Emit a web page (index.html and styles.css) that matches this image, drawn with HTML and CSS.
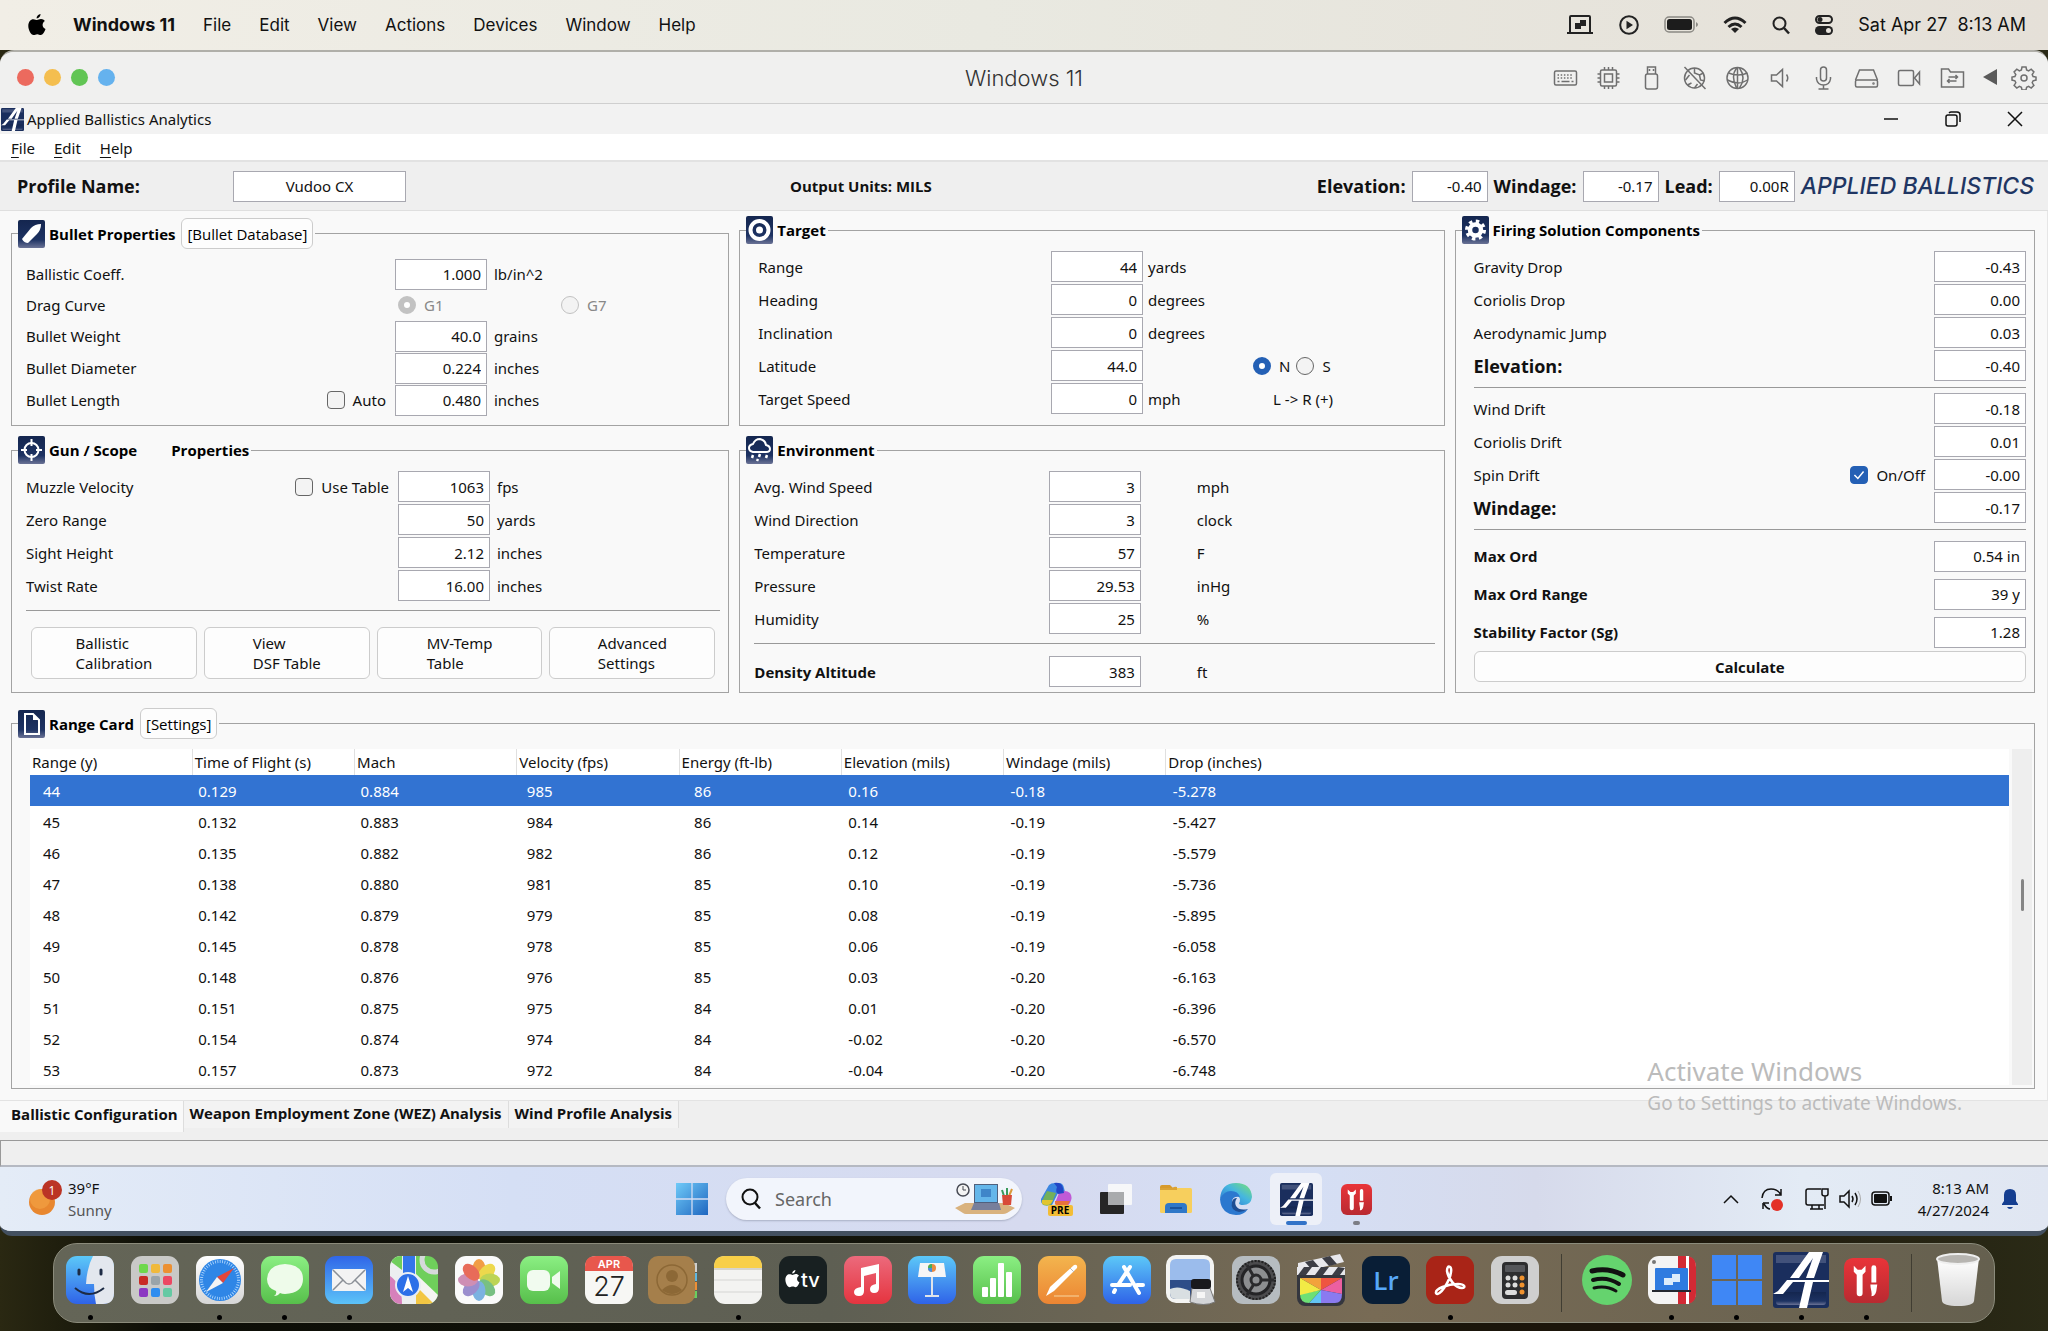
FILE: index.html
```
<!DOCTYPE html>
<html lang="en">
<head>
  <meta charset="UTF-8">
  <meta name="viewport" content="width=device-width, initial-scale=1.0">
  <title>Applied Ballistics Analytics</title>
  <link rel="stylesheet" href="styles.css">
</head>
<body>
  <!-- Shared icon shapes -->
  <svg class="defs" width="0" height="0" aria-hidden="true">
    <defs>
      <linearGradient id="navy" x1="0" y1="0" x2="0" y2="1"><stop offset="0" stop-color="#14264f"/><stop offset="0.7" stop-color="#1d3262"/><stop offset="1" stop-color="#6b7396"/></linearGradient>
      <linearGradient id="winblue" x1="0" y1="0" x2="1" y2="1"><stop offset="0" stop-color="#6fcaf8"/><stop offset="1" stop-color="#1f66c0"/></linearGradient>
      <linearGradient id="skyblue" x1="0" y1="0" x2="0" y2="1"><stop offset="0" stop-color="#5cc8f8"/><stop offset="1" stop-color="#2f63e8"/></linearGradient>
      <linearGradient id="blueup" x1="0" y1="0" x2="0" y2="1"><stop offset="0" stop-color="#3066e8"/><stop offset="1" stop-color="#5cc3f8"/></linearGradient>
      <linearGradient id="green" x1="0" y1="0" x2="0" y2="1"><stop offset="0" stop-color="#8bef83"/><stop offset="1" stop-color="#57bf4b"/></linearGradient>
      <linearGradient id="white" x1="0" y1="0" x2="0" y2="1"><stop offset="0" stop-color="#ffffff"/><stop offset="1" stop-color="#d6d6d6"/></linearGradient>
      <linearGradient id="red" x1="0" y1="0" x2="0" y2="1"><stop offset="0" stop-color="#e93439"/><stop offset="1" stop-color="#b92a31"/></linearGradient>
      <linearGradient id="pink" x1="0" y1="0" x2="0" y2="1"><stop offset="0" stop-color="#ec6a7c"/><stop offset="1" stop-color="#e5343f"/></linearGradient>
      <linearGradient id="orange" x1="0" y1="0" x2="0" y2="1"><stop offset="0" stop-color="#f3b54e"/><stop offset="1" stop-color="#ec8533"/></linearGradient>
      <linearGradient id="edge" x1="0" y1="1" x2="1" y2="0"><stop offset="0" stop-color="#2a6fd0"/><stop offset="0.55" stop-color="#45b6e0"/><stop offset="1" stop-color="#7be36f"/></linearGradient>
      <symbol id="ab" viewBox="0 0 56 56">
        <rect width="56" height="56" rx="3" fill="#1a2e5d"/>
        <path d="M3 3h50v8H3z" fill="#8f95b5" opacity=".35"/>
        <path d="M3 40h50v10q0 3-3 3H6q-3 0-3-3z" fill="url(#navy)"/>
        <path d="M17 26 36 0h14l-9 26h-8l7-20-14 20zM14 28h42v2H40l-6 26h-8l6-26H20L10 42H0l5-3z" fill="#fff"/>
      </symbol>
      <symbol id="tools" viewBox="0 0 46 46">
        <rect width="46" height="46" rx="9" fill="url(#red)"/>
        <path d="M10 8v6l3 3v19a3 3 0 0 0 6 0V17l3-3V8l-4 4h-4z" fill="#fff"/>
        <path d="M28 10a2 2 0 0 1 5 0v15h-5zM27 27h7l-1 7c-1 4-3 5-5 5 1-4-1-7-1-12z" fill="#fff"/>
      </symbol>
      <symbol id="win" viewBox="0 0 50 50"><path d="M0 0h24v24H0zM26 0h24v24H26zM0 26h24v24H0zM26 26h24v24H26z"/></symbol>
      <symbol id="apple" viewBox="0 0 18 22"><path d="M12.500 0c.2 2-1.700 4.400-3.800 4.400C8.400 2.300 10.500.2 12.500 0zM9 6c1 0 2.200-1 4-1 1.600 0 3 .8 3.900 2-3.400 2-2.800 6.700.6 8-.8 2.500-2.700 6-4.700 6-1.400 0-1.900-.8-3.500-.8S6.900 21 5.600 21C3 21 .3 16 .3 12 .3 7.700 2.700 5.200 5.300 5.200 6.900 5.200 8.200 6 9 6z"/></symbol>
    </defs>
  </svg>

  <header class="mac-menu">
    <svg class="apple" width="18" height="22"><use href="#apple"/></svg>
    <nav class="mac-nav">
      <a class="app-name" href="#">Windows 11</a>
      <a href="#">File</a>
      <a href="#">Edit</a>
      <a href="#">View</a>
      <a href="#">Actions</a>
      <a href="#">Devices</a>
      <a href="#">Window</a>
      <a href="#">Help</a>
    </nav>
    <div class="mac-status">
      <svg width="28" height="22" viewBox="0 0 28 22"><path d="M4 18V3q0-1 1-1h18q1 0 1 1v15" fill="none" stroke="#222" stroke-width="2"/><path d="M1 18h26v2H1zM9 9h5V6h6v6h-5v3H9z" fill="#222"/></svg>
      <svg width="20" height="20" viewBox="0 0 20 20"><circle cx="10" cy="10" r="8.800" fill="none" stroke="#222" stroke-width="2"/><path d="M7.500 5.800v8.400l6.500-4.200z" fill="#222"/></svg>
      <svg width="34" height="18" viewBox="0 0 34 18"><rect x="1" y="1" width="29" height="15" rx="4" fill="none" stroke="#8b8984" stroke-width="1.500"/><rect x="3" y="3" width="25" height="11" rx="2.500" fill="#1c1c1c"/><path d="M32 6v5q2-1 2-2.500T32 6z" fill="#8b8984"/></svg>
      <svg width="24" height="18" viewBox="0 0 24 18"><g fill="none" stroke="#222" stroke-width="3"><path d="M1.500 7q10.500-10 21 0"/><path d="M5.500 11q6.500-6 13 0"/></g><path d="m12 17-4-4q4-3 8 0z" fill="#222"/></svg>
      <svg width="18" height="19" viewBox="0 0 18 19"><circle cx="7.500" cy="7.500" r="6" fill="none" stroke="#222" stroke-width="2"/><path d="m12 12 5 5.500" stroke="#222" stroke-width="2.500"/></svg>
      <svg width="18" height="20" viewBox="0 0 18 20"><rect x="1" y="1" width="16" height="7" rx="3.500" fill="none" stroke="#222" stroke-width="2"/><circle cx="5" cy="4.500" r="2.500" fill="#222"/><rect y="11" width="18" height="9" rx="4.500" fill="#222"/><circle cx="13.500" cy="15.500" r="2.500" fill="#e8e4dd"/></svg>
      <span class="mac-clock">Sat Apr 27&nbsp; 8:13 AM</span>
    </div>
  </header>

  <div class="vm-window">
    <div class="vm-title">
      <div class="lights"><i class="red"></i><i class="yellow"></i><i class="green"></i><i class="blue"></i></div>
      <span class="vm-name">Windows 11</span>
      <div class="vm-tools">
        <svg width="24" height="24" viewBox="0 0 24 24"><rect x="1" y="5" width="22" height="14" rx="1.500"/><path d="M4 9h16M4 12h16" stroke-dasharray="1.500 1.700"/><path d="M4 15.500h2M8 15.500h8M18 15.500h2"/></svg>
        <svg width="24" height="24" viewBox="0 0 24 24"><rect x="4" y="4" width="16" height="16" rx="1.500"/><rect x="8" y="8" width="8" height="8"/><path d="M8 1v3M12 1v3M16 1v3M8 20v3M12 20v3M16 20v3M1 8h3M1 12h3M1 16h3M20 8h3M20 12h3M20 16h3"/></svg>
        <svg width="24" height="24" viewBox="0 0 24 24"><path d="M8 8V1h8v7M10 3v2M14 3v2"/><rect x="6" y="8" width="12" height="15" rx="2"/></svg>
        <svg width="24" height="24" viewBox="0 0 24 24"><circle cx="12" cy="12" r="10"/><path d="m2 1 21 22M12 2v5l5 2 4-2M7 9l-4 5M17 9l1 5 4 1M9 17l-4 2M12 22l3-4"/></svg>
        <svg width="24" height="24" viewBox="0 0 24 24"><circle cx="12" cy="12" r="10.500"/><path d="M3 7q10 4 19 0M2 14q11 6 20 0M11 2q-6 8 0 20M14 2q7 10 0 20M12 2v20"/></svg>
        <svg width="24" height="24" viewBox="0 0 24 24"><path d="M3 9h5l6-5.500v17L8 15H3zM18 8.500q2.500 3.500 0 7"/></svg>
        <svg width="24" height="24" viewBox="0 0 24 24"><rect x="9" y="1" width="6" height="14" rx="3"/><path d="M5 11v2q1 6 7 6t7-6v-2M12 19v4M7 23h10"/></svg>
        <svg width="24" height="24" viewBox="0 0 24 24"><path d="M1 14 5 4h14l4 10"/><rect x="1" y="14" width="22" height="7" rx="1.500"/><circle cx="19" cy="17.500" r=".5"/></svg>
        <svg width="24" height="24" viewBox="0 0 24 24"><rect x="1" y="4.500" width="15" height="15" rx="1.500"/><path d="m17 12 5-6v12z"/></svg>
        <svg width="24" height="24" viewBox="0 0 24 24"><path d="M1 21V3h7l2 3h13v15zM7 15h9M9 13l-2 2 2 2M8 11h9M15 9l2 2-2 2"/></svg>
        <svg class="tri" width="14" height="16" viewBox="0 0 14 16"><path d="M0 8 14 0v16z"/></svg>
        <svg width="24" height="24" viewBox="0 0 24 24"><circle cx="12" cy="12" r="3"/><path d="m10 1h4l.6 3 2 .9 2.600-1.700 2.700 2.700-1.700 2.600.9 2 2.900.6v3l-2.900.7-.9 2 1.700 2.600-2.700 2.700-2.600-1.700-2 .9-.6 2.700h-4l-.6-2.700-2-.9-2.600 1.700-2.700-2.700 1.700-2.600-.9-2-2.900-.7v-3l2.900-.6.9-2-1.700-2.600 2.700-2.700 2.600 1.700 2-.9z"/></svg>
      </div>
    </div>

    <div class="app-title">
      <svg width="23" height="23" viewBox="0 0 56 56"><use href="#ab"/></svg>
      <span>Applied Ballistics Analytics</span>
      <div class="win-buttons">
        <button aria-label="Minimize"><svg width="16" height="16"><path d="M1 8h14" stroke="#111" stroke-width="1.500"/></svg></button>
        <button aria-label="Restore"><svg width="16" height="16" fill="none" stroke="#111" stroke-width="1.500"><rect x="1" y="4" width="11" height="11" rx="2"/><path d="M4 2q1-1 2-1h6q3 0 3 3v7"/></svg></button>
        <button aria-label="Close"><svg width="16" height="16"><path d="m1 1 14 14M15 1 1 15" stroke="#111" stroke-width="1.500"/></svg></button>
      </div>
    </div>
    <nav class="app-menu">
      <a href="#"><u>F</u>ile</a>
      <a href="#"><u>E</u>dit</a>
      <a href="#"><u>H</u>elp</a>
    </nav>

    <div class="profile-bar">
      <div class="profile-name">
        <label for="profile">Profile Name:</label>
        <input type="text" id="profile" value="Vudoo CX">
      </div>
      <strong class="units">Output Units: MILS</strong>
      <div class="outputs">
        <label for="outElev">Elevation:</label><input type="text" id="outElev" value="-0.40" readonly>
        <label for="outWind">Windage:</label><input type="text" id="outWind" value="-0.17" readonly>
        <label for="outLead">Lead:</label><input type="text" id="outLead" value="0.00R" readonly>
        <span class="brand">APPLIED BALLISTICS</span>
      </div>
    </div>

    <main class="page">
      <div class="panels">
        <fieldset class="panel bullet">
          <legend>
            <svg width="27" height="28" viewBox="0 0 27 28"><rect width="27" height="28" rx="2" fill="url(#navy)"/><path d="M4 19 13 8q4-4 10-4 0 6-4 10l-9 9q-4 0-6-4z" fill="#fff"/></svg>
            <span>Bullet Properties</span>
            <button class="legend-btn">[Bullet Database]</button>
          </legend>
          <div class="row"><label for="bc">Ballistic Coeff.</label><input type="text" id="bc" value="1.000"><span class="unit">lb/in^2</span></div>
          <div class="row drag">
            <span>Drag Curve</span>
            <div class="drag-options">
              <label class="check"><input type="radio" name="drag" checked disabled> G1</label>
              <label class="check"><input type="radio" name="drag" disabled> G7</label>
            </div>
          </div>
          <div class="row"><label for="weight">Bullet Weight</label><input type="text" id="weight" value="40.0"><span class="unit">grains</span></div>
          <div class="row"><label for="diameter">Bullet Diameter</label><input type="text" id="diameter" value="0.224"><span class="unit">inches</span></div>
          <div class="row">
            <div class="lead"><label for="length">Bullet Length</label><label class="check"><input type="checkbox"> Auto</label></div>
            <input type="text" id="length" value="0.480"><span class="unit">inches</span>
          </div>
        </fieldset>

        <fieldset class="panel target">
          <legend>
            <svg width="27" height="28" viewBox="0 0 27 28"><rect width="27" height="28" rx="2" fill="url(#navy)"/><circle cx="13.500" cy="14" r="9" fill="none" stroke="#fff" stroke-width="4"/><circle cx="13.500" cy="14" r="3.500" fill="#fff"/></svg>
            <span>Target</span>
          </legend>
          <div class="row"><label for="range">Range</label><input type="text" id="range" value="44"><span class="unit">yards</span></div>
          <div class="row"><label for="heading">Heading</label><input type="text" id="heading" value="0"><span class="unit">degrees</span></div>
          <div class="row"><label for="incl">Inclination</label><input type="text" id="incl" value="0"><span class="unit">degrees</span></div>
          <div class="row">
            <label for="lat">Latitude</label><input type="text" id="lat" value="44.0"><span class="unit"></span>
            <div class="extra">
              <label class="check"><input type="radio" name="hemi" checked> N</label>
              <label class="check"><input type="radio" name="hemi"> S</label>
            </div>
          </div>
          <div class="row"><label for="tspeed">Target Speed</label><input type="text" id="tspeed" value="0"><span class="unit">mph</span><span class="extra direction">L -&gt; R (+)</span></div>
        </fieldset>

        <fieldset class="panel firing">
          <legend>
            <svg width="27" height="28" viewBox="0 0 27 28"><rect width="27" height="28" rx="2" fill="url(#navy)"/><circle cx="13.500" cy="14" r="8.500" fill="none" stroke="#fff" stroke-width="4" stroke-dasharray="3.340 3.340"/><circle cx="13.500" cy="14" r="5.500" fill="none" stroke="#fff" stroke-width="4.500"/></svg>
            <span>Firing Solution Components</span>
          </legend>
          <div class="row"><label for="gdrop">Gravity Drop</label><input type="text" id="gdrop" value="-0.43" readonly></div>
          <div class="row"><label for="cdrop">Coriolis Drop</label><input type="text" id="cdrop" value="0.00" readonly></div>
          <div class="row"><label for="ajump">Aerodynamic Jump</label><input type="text" id="ajump" value="0.03" readonly></div>
          <div class="row"><label class="total" for="felev">Elevation:</label><input type="text" id="felev" value="-0.40" readonly></div>
          <hr>
          <div class="row"><label for="wdrift">Wind Drift</label><input type="text" id="wdrift" value="-0.18" readonly></div>
          <div class="row"><label for="cdrift">Coriolis Drift</label><input type="text" id="cdrift" value="0.01" readonly></div>
          <div class="row">
            <div class="lead"><label for="sdrift">Spin Drift</label><label class="check"><input type="checkbox" checked> On/Off</label></div>
            <input type="text" id="sdrift" value="-0.00" readonly>
          </div>
          <div class="row"><label class="total" for="fwind">Windage:</label><input type="text" id="fwind" value="-0.17" readonly></div>
          <hr>
          <div class="summary">
            <div class="row"><label for="maxord">Max Ord</label><input type="text" id="maxord" value="0.54 in" readonly></div>
            <div class="row"><label for="maxrange">Max Ord Range</label><input type="text" id="maxrange" value="39 y" readonly></div>
            <div class="row"><label for="sg">Stability Factor (Sg)</label><input type="text" id="sg" value="1.28" readonly></div>
          </div>
          <button class="calculate">Calculate</button>
        </fieldset>

        <fieldset class="panel gun">
          <legend>
            <svg width="27" height="28" viewBox="0 0 27 28"><rect width="27" height="28" rx="2" fill="url(#navy)"/><g fill="none" stroke="#fff" stroke-width="2"><circle cx="13.500" cy="14" r="7"/><path d="M13.500 3v7M13.500 18v7M3 14h6M18 14h6"/></g></svg>
            <span>Gun / Scope</span>
            <span class="legend-more">Properties</span>
          </legend>
          <div class="row">
            <div class="lead"><label for="mv">Muzzle Velocity</label><label class="check"><input type="checkbox"> Use Table</label></div>
            <input type="text" id="mv" value="1063"><span class="unit">fps</span>
          </div>
          <div class="row"><label for="zero">Zero Range</label><input type="text" id="zero" value="50"><span class="unit">yards</span></div>
          <div class="row"><label for="sight">Sight Height</label><input type="text" id="sight" value="2.12"><span class="unit">inches</span></div>
          <div class="row"><label for="twist">Twist Rate</label><input type="text" id="twist" value="16.00"><span class="unit">inches</span></div>
          <hr>
          <div class="gun-buttons">
            <button><span>Ballistic<br>Calibration</span></button>
            <button><span>View<br>DSF Table</span></button>
            <button><span>MV-Temp<br>Table</span></button>
            <button><span>Advanced<br>Settings</span></button>
          </div>
        </fieldset>

        <fieldset class="panel environment">
          <legend>
            <svg width="27" height="28" viewBox="0 0 27 28"><rect width="27" height="28" rx="2" fill="url(#navy)"/><path d="M7 16q-4-1-4-4 0-3 4-4 2-5 7-5 5 1 6 6 4 1 4 4t-4 3z" fill="none" stroke="#fff" stroke-width="2"/><path d="m7 19-1 3M14 18l-1 3M21 19l-1 3M12 23l-1 2" stroke="#fff" stroke-width="2.500"/></svg>
            <span>Environment</span>
          </legend>
          <div class="row"><label for="wspeed">Avg. Wind Speed</label><input type="text" id="wspeed" value="3"><span class="unit">mph</span></div>
          <div class="row"><label for="wdir">Wind Direction</label><input type="text" id="wdir" value="3"><span class="unit">clock</span></div>
          <div class="row"><label for="temp">Temperature</label><input type="text" id="temp" value="57"><span class="unit">F</span></div>
          <div class="row"><label for="press">Pressure</label><input type="text" id="press" value="29.53"><span class="unit">inHg</span></div>
          <div class="row"><label for="hum">Humidity</label><input type="text" id="hum" value="25"><span class="unit">%</span></div>
          <hr>
          <div class="row density"><label for="da">Density Altitude</label><input type="text" id="da" value="383"><span class="unit">ft</span></div>
        </fieldset>
      </div>

      <fieldset class="panel range-card">
        <legend>
          <svg width="27" height="28" viewBox="0 0 27 28"><rect width="27" height="28" rx="2" fill="url(#navy)"/><path d="M7 4h8l6 6v14H7z" fill="none" stroke="#fff" stroke-width="2"/><path d="M15 4v6h6z" fill="#fff"/></svg>
          <span>Range Card</span>
          <button class="legend-btn">[Settings]</button>
        </legend>
        <div class="card-body">
          <table>
            <thead>
              <tr><th>Range (y)</th><th>Time of Flight (s)</th><th>Mach</th><th>Velocity (fps)</th><th>Energy (ft-lb)</th><th>Elevation (mils)</th><th>Windage (mils)</th><th class="last">Drop (inches)</th></tr>
            </thead>
            <tbody>
              <tr class="selected"><td>44</td><td>0.129</td><td>0.884</td><td>985</td><td>86</td><td>0.16</td><td>-0.18</td><td>-5.278</td></tr>
              <tr><td>45</td><td>0.132</td><td>0.883</td><td>984</td><td>86</td><td>0.14</td><td>-0.19</td><td>-5.427</td></tr>
              <tr><td>46</td><td>0.135</td><td>0.882</td><td>982</td><td>86</td><td>0.12</td><td>-0.19</td><td>-5.579</td></tr>
              <tr><td>47</td><td>0.138</td><td>0.880</td><td>981</td><td>85</td><td>0.10</td><td>-0.19</td><td>-5.736</td></tr>
              <tr><td>48</td><td>0.142</td><td>0.879</td><td>979</td><td>85</td><td>0.08</td><td>-0.19</td><td>-5.895</td></tr>
              <tr><td>49</td><td>0.145</td><td>0.878</td><td>978</td><td>85</td><td>0.06</td><td>-0.19</td><td>-6.058</td></tr>
              <tr><td>50</td><td>0.148</td><td>0.876</td><td>976</td><td>85</td><td>0.03</td><td>-0.20</td><td>-6.163</td></tr>
              <tr><td>51</td><td>0.151</td><td>0.875</td><td>975</td><td>84</td><td>0.01</td><td>-0.20</td><td>-6.396</td></tr>
              <tr><td>52</td><td>0.154</td><td>0.874</td><td>974</td><td>84</td><td>-0.02</td><td>-0.20</td><td>-6.570</td></tr>
              <tr><td>53</td><td>0.157</td><td>0.873</td><td>972</td><td>84</td><td>-0.04</td><td>-0.20</td><td>-6.748</td></tr>
            </tbody>
          </table>
          <div class="scrollbar"><i></i></div>
        </div>
      </fieldset>
    </main>

    <div class="tabs">
      <button class="tab active">Ballistic Configuration</button>
      <button class="tab">Weapon Employment Zone (WEZ) Analysis</button>
      <button class="tab">Wind Profile Analysis</button>
    </div>
    <div class="status-bar"></div>

    <div class="activate">
      <p class="activate-title">Activate Windows</p>
      <p>Go to Settings to activate Windows.</p>
    </div>

    <footer class="taskbar">
      <div class="weather">
        <svg width="36" height="40" viewBox="0 0 36 40"><circle cx="14" cy="23" r="13" fill="#e8872f"/><circle cx="12" cy="20" r="10" fill="#f3a548" opacity=".6"/><circle cx="24" cy="11" r="10" fill="#bb3425"/><text x="24" y="16" text-anchor="middle" class="badge">1</text></svg>
        <p>39°F<br><span>Sunny</span></p>
      </div>
      <div class="pinned">
        <a href="#" class="pin" aria-label="Start"><svg width="32" height="32" fill="url(#winblue)"><use href="#win"/></svg></a>
        <div class="search">
          <svg width="20" height="22" viewBox="0 0 20 22"><circle cx="9" cy="9" r="7.500" fill="none" stroke="#111" stroke-width="2"/><path d="m14 15 5 5.500" stroke="#111" stroke-width="2.500"/></svg>
          <input type="text" placeholder="Search" aria-label="Search">
          <svg width="62" height="32" viewBox="0 0 62 32"><path d="m1 25 10-5h39l11 5-8 5q-2 1-4 1H12q-2 0-3-1z" fill="#d9b27e"/><circle cx="9" cy="7" r="6" fill="#f4f4f4" stroke="#484b55" stroke-width="1.500"/><path d="M9 3v4h3" fill="none" stroke="#484b55"/><path d="M20 1h24v19H20z" fill="#50607d"/><path d="M21 2h22v17H21z" fill="#64b6ea"/><path d="M27 6h10v8H27z" fill="#3f86c9"/><path d="m20 20-3 7h30l-2-7z" fill="#777f9b"/><path d="m50 13-2-6M53 13V5" stroke="#3a9a5c" stroke-width="2"/><path d="m55 13 3-7" stroke="#d99a3a" stroke-width="2"/><path d="M48 12h10l-1 10h-8z" fill="#d84a38"/></svg>
        </div>
        <a href="#" class="pin" aria-label="Copilot"><svg width="34" height="34" viewBox="0 0 34 34"><path d="M10 3q2-2 6-2h4q4 0 5 5l1 4-7 1-6 12H8q-7 0-6-6z" fill="#3b86e0"/><path d="M8 9Q2 20 3 22q3 3 9 1l5-12z" fill="#74b05a"/><path d="M3 18q-2 5 5 5 4 0 6-5z" fill="#e2c52e"/><path d="M20 11q6-4 11 0 3 4 0 10-3 5-8 5-5-1-7-5z" fill="#c05ad6"/><path d="M16 19h15q-3 7-9 7-4-1-6-4z" fill="#e8713d"/><path d="M15 1q8-1 9 5l1 5-6 1q-3-2-1-7z" fill="#2247c6"/><rect x="9" y="23" width="25" height="11" rx="2" fill="#f3bd35"/><text x="21" y="32" text-anchor="middle" class="pre">PRE</text></svg></a>
        <a href="#" class="pin" aria-label="Task View"><svg width="34" height="32" viewBox="0 0 34 32"><rect x="1" y="9" width="24" height="22" rx="1" fill="#262626"/><rect x="9" y="1" width="24" height="21" rx="1" fill="#fafafa" opacity=".9"/><path d="M9 9h16v13H9z" fill="#a9abad"/></svg></a>
        <a href="#" class="pin" aria-label="File Explorer"><svg width="34" height="32" viewBox="0 0 34 32"><path d="M1 4q0-2 2-2h8l4 4H1z" fill="#d79a2c"/><rect x="1" y="5" width="32" height="25" rx="1.500" fill="#f7cf5d"/><path d="M1 5h12q3-2 5-1v3H1z" fill="#dba334"/><path d="M6 30v-6q0-4 4-4h14q4 0 4 4v6z" fill="#2f78c8"/><path d="M11 25h12" stroke="#14498f" stroke-width="1.500"/></svg></a>
        <a href="#" class="pin" aria-label="Edge"><svg width="34" height="34" viewBox="0 0 34 34"><path d="M1 17Q2 1 17 1t16 14q-1 8-9 8-4 0-4-2 1-1 1-4-2-5-7-5Q5 12 1 17z" fill="url(#edge)"/><path d="M1 17q4-8 11-8 7 0 9 6-8-1-8 5 0 8 9 9 4 0 7-2-4 6-12 6Q2 32 1 17z" fill="#2b78cf"/><path d="M13 20q-2 8 7 10 5 0 9-3-9 2-12-3-2-4 1-8-4 0-5 4z" fill="#1d4d93"/></svg></a>
        <a href="#" class="pin current" aria-label="Applied Ballistics"><svg width="33" height="33" viewBox="0 0 56 56"><use href="#ab"/></svg></a>
        <a href="#" class="pin open" aria-label="Parallels Toolbox"><svg width="31" height="31" viewBox="0 0 46 46"><use href="#tools"/></svg></a>
      </div>
      <div class="tray">
        <svg width="16" height="10" viewBox="0 0 16 10"><path d="m1 9 7-7 7 7" fill="none" stroke="#111" stroke-width="1.500"/></svg>
        <svg width="24" height="24" viewBox="0 0 24 24"><path d="M2 11Q3 2 11 2q7 0 10 6M21 2v6h-6M3 16v6M3 16h6M4 17q3 5 6 5" fill="none" stroke="#111" stroke-width="1.500"/><circle cx="17" cy="18" r="6" fill="#e33127"/></svg>
        <svg width="24" height="24" viewBox="0 0 24 24"><path d="M16 2H3q-2 0-2 2v12q0 2 2 2h16M7 18v4M14 18v4M5 22h13M17 2h6v5q0 2-3 2t-3-2zM20 9v13" fill="none" stroke="#111" stroke-width="1.500"/></svg>
        <svg width="22" height="20" viewBox="0 0 22 20"><path d="M1 7h4l5-5v16l-5-5H1zM13 7q2 3 0 6M16 4q4 6 0 12" fill="none" stroke="#111" stroke-width="1.500"/><path d="M19 2q5 8 0 16" fill="none" stroke="#aaa"/></svg>
        <svg width="22" height="16" viewBox="0 0 22 16"><rect x="1" y="1" width="17" height="13" rx="3" fill="none" stroke="#111" stroke-width="1.500"/><rect x="3" y="3" width="13" height="9" rx="1" fill="#111"/><path d="M19 5h2v5h-2z" fill="#111"/></svg>
        <p class="clock">8:13 AM<br>4/27/2024</p>
        <svg width="18" height="22" viewBox="0 0 18 22"><path d="M1 17v-1l2-3V7q0-6 6-6t6 6v6l2 3v1zM6 19h6q-1 2-3 2t-3-2z" fill="#153e90"/></svg>
      </div>
    </footer>
  </div>

  <nav class="dock">
    <a href="#" class="running" aria-label="Finder"><svg width="48" height="48" viewBox="0 0 48 48"><rect width="48" height="48" rx="11" fill="url(#skyblue)"/><path d="M27 0h10q11 0 11 11v26q0 11-11 11H30q-2-9-2-20h-8Q21 11 27 0z" fill="#e3e7ee"/><path d="M13 14v4M35 14v4" stroke="#1d2b45" stroke-width="3" stroke-linecap="round"/><path d="M9 32q14 12 29 0" fill="none" stroke="#1d2b45" stroke-width="2"/></svg></a>
    <a href="#" aria-label="Launchpad"><svg width="48" height="48" viewBox="0 0 48 48"><rect width="48" height="48" rx="11" fill="#c9c9c7"/><g><rect x="8" y="8" width="9" height="9" rx="2" fill="#6ed84b"/><rect x="20" y="8" width="9" height="9" rx="2" fill="#f0b93b"/><rect x="32" y="8" width="9" height="9" rx="2" fill="#ec9032"/><rect x="8" y="20" width="9" height="9" rx="2" fill="#c92b24"/><rect x="20" y="20" width="9" height="9" rx="2" fill="#9aa4a9"/><rect x="32" y="20" width="9" height="9" rx="2" fill="#ec4863"/><rect x="8" y="32" width="9" height="9" rx="2" fill="#8c38c2"/><rect x="20" y="32" width="9" height="9" rx="2" fill="#2f8df0"/><rect x="32" y="32" width="9" height="9" rx="2" fill="#65c9a3"/></g></svg></a>
    <a href="#" class="running" aria-label="Safari"><svg width="48" height="48" viewBox="0 0 48 48"><rect width="48" height="48" rx="11" fill="url(#white)"/><circle cx="24" cy="24" r="21" fill="#2f86e6"/><circle cx="24" cy="24" r="18.500" fill="none" stroke="#b8dcff" stroke-width="3" stroke-dasharray=".8 1.600"/><path d="m38 12-17 9 6 6z" fill="#e4453a"/><path d="m10 36 11-15 6 6z" fill="#f4f4f4"/></svg></a>
    <a href="#" class="running" aria-label="Messages"><svg width="48" height="48" viewBox="0 0 48 48"><rect width="48" height="48" rx="11" fill="url(#green)"/><path d="M24 8q18 1 18 15T24 38q-3 0-5-1-2 3-6 3 3-2 2-5-9-3-9-12Q7 9 24 8z" fill="#eefbea"/></svg></a>
    <a href="#" class="running" aria-label="Mail"><svg width="48" height="48" viewBox="0 0 48 48"><rect width="48" height="48" rx="11" fill="url(#blueup)"/><rect x="7" y="13" width="34" height="22" rx="2" fill="#f3f3f3"/><path d="m8 14 13 13q3 2 6 0l13-13M8 34l10-10M40 34 30 24" fill="none" stroke="#8a8f96" stroke-width="1.500"/></svg></a>
    <a href="#" aria-label="Maps"><svg class="rounded" width="48" height="48" viewBox="0 0 48 48"><rect width="48" height="48" fill="#6fcf5b"/><path d="M0 0h26v48H0z" fill="#eceff0"/><path d="M0 0h12v14L0 5z" fill="#6fcf5b"/><path d="M0 20q12 8 12 28H0z" fill="#d680bb"/><path d="M13 0h12v28H13z" fill="#3476ea"/><path d="m26 18 22 21v9H26z" fill="#f4f4f2"/><path d="m26 30 18 18H26z" fill="#f2c643"/><circle cx="44" cy="4" r="12" fill="none" stroke="#d5d9da" stroke-width="5"/><circle cx="18" cy="29" r="12" fill="#2c6fe8" stroke="#e9edf4" stroke-width="2"/><path d="m18 20 5 16-5-4-5 4z" fill="#fff"/></svg></a>
    <a href="#" aria-label="Photos"><svg width="48" height="48" viewBox="0 0 48 48"><rect width="48" height="48" rx="11" fill="#fafafa"/><g opacity=".88"><ellipse cx="24" cy="13" rx="6.500" ry="10" fill="#f0912e"/><ellipse cx="24" cy="13" rx="6.500" ry="10" fill="#ecd435" transform="rotate(45 24 24)"/><ellipse cx="24" cy="13" rx="6.500" ry="10" fill="#b5cf3f" transform="rotate(90 24 24)"/><ellipse cx="24" cy="13" rx="6.500" ry="10" fill="#67b973" transform="rotate(135 24 24)"/><ellipse cx="24" cy="13" rx="6.500" ry="10" fill="#6aa9de" transform="rotate(180 24 24)"/><ellipse cx="24" cy="13" rx="6.500" ry="10" fill="#8e80c8" transform="rotate(225 24 24)"/><ellipse cx="24" cy="13" rx="6.500" ry="10" fill="#c880ab" transform="rotate(270 24 24)"/><ellipse cx="24" cy="13" rx="6.500" ry="10" fill="#e65843" transform="rotate(315 24 24)"/></g></svg></a>
    <a href="#" aria-label="FaceTime"><svg width="48" height="48" viewBox="0 0 48 48"><rect width="48" height="48" rx="11" fill="url(#green)"/><rect x="7" y="14" width="23" height="21" rx="6" fill="#f1fbef"/><path d="m32 21 8-6v18l-8-6z" fill="#f1fbef"/></svg></a>
    <a href="#" aria-label="Calendar"><svg width="48" height="48" viewBox="0 0 48 48"><rect width="48" height="48" rx="11" fill="#f7f7f4"/><path d="M0 15v-4Q0 0 11 0h26q11 0 11 11v4z" fill="#e8574c"/><text x="24" y="12" text-anchor="middle" class="cal-month">APR</text><text x="24" y="40" text-anchor="middle" class="cal-day">27</text></svg></a>
    <a href="#" aria-label="Contacts"><svg width="50" height="48" viewBox="0 0 50 48"><path d="M44 7h5v9h-5z" fill="#cfcfcd"/><path d="M44 17h5v8h-5z" fill="#5fb8e2"/><path d="M44 26h5v8h-5z" fill="#ef8f35"/><path d="M44 35h5v7h-5z" fill="#69cf60"/><rect width="47" height="48" rx="10" fill="#a57f4b"/><g fill="#8c6836"><circle cx="24" cy="24" r="15" fill="none" stroke="#8c6836" stroke-width="1.500"/><circle cx="24" cy="20" r="6"/><path d="M14 34q10-10 20 0-10 8-20 0z"/></g></svg></a>
    <a href="#" class="running" aria-label="Notes"><svg width="48" height="48" viewBox="0 0 48 48"><rect width="48" height="48" rx="11" fill="#f3f3f1"/><path d="M0 12v-1Q0 0 11 0h26q11 0 11 11v1z" fill="#f8cf48"/><path d="M0 13h48" stroke="#b9b5a8"/><path d="M0 24h48M0 36h48" stroke="#d5d5d3"/></svg></a>
    <a href="#" aria-label="TV"><svg width="48" height="48" viewBox="0 0 48 48"><rect width="48" height="48" rx="11" fill="#182021"/><svg x="6" y="14" width="15" height="18" fill="#fff"><use href="#apple"/></svg><text x="22" y="31" class="tv">tv</text></svg></a>
    <a href="#" aria-label="Music"><svg width="48" height="48" viewBox="0 0 48 48"><rect width="48" height="48" rx="11" fill="url(#pink)"/><path d="M17 12 35 8v24q0 5-5 5-4 0-4-4t6-5V17l-12 3v15q0 5-5 5-5 0-5-4t7-5z" fill="#fff"/></svg></a>
    <a href="#" aria-label="Keynote"><svg width="48" height="48" viewBox="0 0 48 48"><rect width="48" height="48" rx="11" fill="url(#skyblue)"/><path d="M12 7h24l2 14H10z" fill="#f6f6f6"/><path d="M23 21h2v19h-2zM17 39h14v2H17z" fill="#dfe4ea"/><circle cx="24" cy="12" r="4" fill="#ea8b42"/><path d="M24 12V8a4 4 0 0 0-4 4z" fill="#45b058"/><path d="M24 12h-4a4 4 0 0 0 4 4z" fill="#438fe0"/></svg></a>
    <a href="#" aria-label="Numbers"><svg width="48" height="48" viewBox="0 0 48 48"><rect width="48" height="48" rx="11" fill="url(#green)"/><g fill="#fff"><rect x="9" y="31" width="6" height="10" rx="1"/><rect x="17" y="22" width="6" height="19" rx="1"/><rect x="25" y="7" width="6" height="34" rx="1"/><rect x="33" y="16" width="6" height="25" rx="1"/></g></svg></a>
    <a href="#" aria-label="Pages"><svg width="48" height="48" viewBox="0 0 48 48"><rect width="48" height="48" rx="11" fill="url(#orange)"/><path d="m8 40 4-9L36 9q4-1 3 3L16 35z" fill="#fff"/><path d="m32 12 4 4" stroke="#bbb"/><path d="M16 40h25" stroke="#f7d6a0"/></svg></a>
    <a href="#" aria-label="App Store"><svg width="48" height="48" viewBox="0 0 48 48"><rect width="48" height="48" rx="11" fill="url(#skyblue)"/><path d="M27 11 15 29M21 11l15 26M9 29h18M34 29h6M12 34l-1 2" stroke="#fff" stroke-width="4" stroke-linecap="round"/></svg></a>
    <a href="#" aria-label="Preview"><svg width="50" height="50" viewBox="0 0 50 50"><rect width="48" height="48" rx="10" fill="#f4f4f2"/><path d="M4 25V10q0-6 6-6h28q6 0 6 6v15z" fill="#9bbcec"/><path d="M4 25h40v13q0 6-6 6H10q-6 0-6-6z" fill="#2e4d88"/><path d="M4 34q8-4 20 2v8H10q-6 0-6-6z" fill="#d9dfe2"/><path d="M26 33h18l5 14q-11 5-25 0z" fill="#d3d5d8" stroke="#777"/><path d="M31 37h8v6h-8z" fill="#f6f6f6"/><rect x="25" y="24" width="20" height="10" rx="3" fill="#19191c"/></svg></a>
    <a href="#" aria-label="System Settings"><svg width="48" height="48" viewBox="0 0 48 48"><rect width="48" height="48" rx="11" fill="#b6bcc0"/><circle cx="24" cy="24" r="20" fill="#4b4b4d"/><circle cx="24" cy="24" r="19" fill="none" stroke="#222" stroke-width="2" stroke-dasharray="2 1.500"/><circle cx="24" cy="24" r="14" fill="#8c8e90" stroke="#242426" stroke-width="3"/><circle cx="24" cy="24" r="5" fill="none" stroke="#2a2a2c" stroke-width="3"/><path d="m22 21-7-12M29 24h13M22 28l-7 11" stroke="#2a2a2c" stroke-width="3"/></svg></a>
    <a href="#" aria-label="Final Cut Pro"><svg width="48" height="52" viewBox="0 0 48 52"><path d="M1 9 43 0l4 8L1 19z" fill="#e8e8ec"/><path d="m8 8 7 8 8-2-7-8zM25 4l7 8 8-2-7-8z" fill="#3c3d45"/><rect x="0" y="13" width="48" height="39" rx="8" fill="#34363e"/><path d="M0 13h48v8H0z" fill="#e8e8ec"/><path d="m7 13-6 8h8l6-8zM24 13l-6 8h8l6-8zM41 13l-6 8h8l5-7z" fill="#3c3d45"/><path d="M24 36 3 24h21z" fill="#f2a33c"/><path d="M24 36V24h21z" fill="#ef5540"/><path d="M24 36 45 24v16z" fill="#ec5fa0"/><path d="m24 36 21 4q0 9-7 9H24z" fill="#8a7af0"/><path d="M24 36v13H12z" fill="#62c5f4"/><path d="M24 36 12 49q-9 0-9-9z" fill="#6de076"/><path d="M24 36 3 41V24z" fill="#f2ea45"/></svg></a>
    <a href="#" aria-label="Lightroom"><svg width="48" height="48" viewBox="0 0 48 48"><rect width="48" height="48" rx="11" fill="#091e36"/><text x="24" y="34" text-anchor="middle" class="lr">Lr</text></svg></a>
    <a href="#" class="running" aria-label="Acrobat"><svg width="48" height="48" viewBox="0 0 48 48"><rect width="48" height="48" rx="11" fill="#a92417"/><path d="M10 37c-1-4 11-9 22-9 7 0 8 4 4 4-7 0-14-10-15-17 0-7 5-5 4 1-1 9-12 26-15 21z" fill="none" stroke="#fff" stroke-width="2.500"/></svg></a>
    <a href="#" aria-label="Calculator"><svg width="48" height="48" viewBox="0 0 48 48"><rect width="48" height="48" rx="11" fill="#cfcfcf"/><rect x="11" y="6" width="26" height="37" rx="4" fill="#2d2d2f"/><rect x="14" y="9" width="20" height="7" rx="1" fill="#55565a"/><g fill="#ddd"><circle cx="17" cy="22" r="2.500"/><circle cx="24" cy="22" r="2.500"/><circle cx="17" cy="29" r="2.500"/><circle cx="24" cy="29" r="2.500"/><rect x="14" y="34" width="12" height="5" rx="2.500"/></g><g fill="#f0922e"><circle cx="31" cy="22" r="2.500"/><circle cx="31" cy="29" r="2.500"/><circle cx="31" cy="36" r="2.500"/></g></svg></a>
    <i class="divider"></i>
    <a href="#" aria-label="Spotify"><svg width="50" height="50" viewBox="0 0 50 50"><circle cx="25" cy="25" r="25" fill="#65d36e"/><g fill="none" stroke="#111" stroke-linecap="round"><path d="M10 16q16-4 31 4" stroke-width="5"/><path d="M11 25q14-4 26 4" stroke-width="4"/><path d="M12 33q12-3 22 3" stroke-width="3"/></g></svg></a>
    <a href="#" class="running" aria-label="Parallels"><svg width="48" height="48" viewBox="0 0 48 48"><rect width="48" height="48" rx="11" fill="#f4f4f4"/><path d="M30 0h7q11 0 11 11v26q0 11-11 11h-7z" fill="#d32a34"/><path d="M38 0h3v48h-3z" fill="#fff"/><circle cx="6" cy="6" r="2" fill="#777"/><rect x="7" y="12" width="33" height="23" rx="1" fill="#2f7be0"/><path d="M16 22h8v-4h8v8h-7v3h-9z" fill="#dcecfb"/><path d="M4 34h39v2H4z" fill="#252830"/></svg></a>
    <a href="#" class="running" aria-label="Windows 11"><svg width="50" height="50" fill="#3f87f5"><use href="#win"/></svg></a>
    <a href="#" class="running" aria-label="Applied Ballistics Analytics"><svg width="56" height="56" viewBox="0 0 56 56"><use href="#ab"/></svg></a>
    <a href="#" class="running" aria-label="Toolbox"><svg width="45" height="45" viewBox="0 0 46 46"><use href="#tools"/></svg></a>
    <i class="divider"></i>
    <a href="#" aria-label="Trash"><svg width="44" height="54" viewBox="0 0 44 54"><path d="m1 5 5 43q1 5 16 5t16-5l5-43z" fill="url(#white)"/><ellipse cx="22" cy="6" rx="21" ry="5" fill="#b7b5b1" stroke="#efefef" stroke-width="2"/></svg></a>
  </nav>
</body>
</html>
```

FILE: styles.css
```
* { box-sizing: border-box; }
body {
  margin: 0;
  min-height: 100vh;
  display: flex;
  flex-direction: column;
  font-family: "Noto Sans", "Open Sans", sans-serif;
  font-size: 15px;
  line-height: 20px;
  color: #111;
  background: linear-gradient(90deg, #2a2812, #0c0d06 8%, #14150b 50%, #1c150a 80%, #2a2a16);
}
a { color: inherit; text-decoration: none; }
p { margin: 0; }
svg { display: block; flex: none; }
button, input { font: inherit; color: inherit; }
.defs { position: absolute; }

/* Mac menu bar */
.mac-menu { display: flex; align-items: center; height: 50px; padding: 0 22px 0 28px; background: linear-gradient(90deg, #f1eee6, #e9e9e1 48%, #e5e0d8); font-family: Inter, sans-serif; font-size: 17px; color: #111; }
.mac-nav { display: flex; gap: 28px; margin-left: 27px; }
.app-name, .mac-clock { font-size: 18px; }
.app-name { font-weight: 700; }
.mac-status { display: flex; align-items: center; gap: 25px; margin-left: auto; }

/* Virtual machine window */
.vm-window { position: relative; background: #efefef; border-top: 2px solid #b0afa9; border-radius: 14px 14px 12px 12px; border-bottom: 5px solid #435060; overflow: hidden; }
.vm-title { display: grid; grid-template-columns: 1fr auto 1fr; align-items: center; height: 52px; padding: 0 6px; background: #f0f0ef; border-bottom: 1px solid #cfcfcf; font-family: Inter, sans-serif; }
.lights { display: flex; gap: 10px; margin-left: 11px; }
.lights i { width: 17px; height: 17px; border-radius: 50%; }
.red { background: #ec6a5e; }
.yellow { background: #f4be4f; }
.green { background: #61c554; }
.blue { background: #65b2ee; }
.vm-name { font-size: 22px; font-weight: 300; color: #333; }
.vm-tools { display: flex; justify-content: flex-end; fill: none; stroke: #6f6f6f; stroke-width: 1.500; }
.vm-tools svg { width: 43px; }
.vm-tools svg:last-child { width: 36px; }
.vm-tools .tri { width: 32px; height: 16px; margin-top: 3px; fill: #5a5a5a; stroke: none; }

/* Application header */
.app-title { display: flex; align-items: center; gap: 3px; height: 30px; padding-left: 1px; background: #f2f2f2; }
.win-buttons { display: flex; margin-left: auto; padding-right: 2px; }
.win-buttons button { display: flex; justify-content: center; width: 62px; padding: 0; border: 0; background: none; }
.app-menu { display: flex; gap: 19px; height: 28px; padding: 4px 11px; background: #fff; border-bottom: 2px solid #e2e2e2; }
.app-menu u { text-underline-offset: 3px; }
.profile-bar { display: flex; align-items: center; height: 49px; padding: 0 14px 0 17px; border-bottom: 1px solid #dfdfdf; }
.profile-bar label, .total { font-family: "Open Sans", sans-serif; font-size: 18px; font-weight: 700; }
.profile-name { display: flex; align-items: center; width: 773px; }
.profile-name label { width: 216px; }
.outputs { display: flex; align-items: center; gap: 6px; margin-left: auto; }
.outputs input { width: 76px; }
input[type="text"] { height: 31px; padding: 0 5px; border: 1px solid #a8a8b0; border-radius: 0; background: #fff; text-align: right; outline: 0; }
.profile-name input[type="text"] { width: 173px; text-align: center; }
.units { font-family: "Open Sans", sans-serif; }
.brand { font-family: Inter, sans-serif; font-size: 23px; font-style: italic; font-weight: 500; color: #1f3663; white-space: nowrap; }

/* Panels */
.page { padding: 5px 12px 11px 11px; background: #f9f9f9; border-bottom: 1px solid #e3e3e3; border-right: 1px solid #e6e6e6; }
.panels { display: grid; grid-template-columns: 719fr 706fr 581fr; grid-template-rows: 210px 257px; gap: 10px; }
.panel { min-width: 0; margin: 0; border: 1px solid #a3a3a3; }
.panel legend { display: flex; align-items: center; gap: 4px; padding: 0 2px 0 0; font-family: "Open Sans", sans-serif; font-weight: 700; color: #000; }
.legend-btn { height: 31px; margin-left: 2px; padding: 0 5px; border: 1px solid #ccc; border-radius: 6px; background: #fdfdfd; font-weight: 400; }
.legend-more { margin-left: 30px; }
.bullet { margin-top: 2px; padding: 9px 8px 0 14px; }
.target { padding: 6px 9px 0 18px; }
.gun { padding: 6px 8px 0 14px; }
.environment { padding: 6px 9px 0 14px; }
.firing { grid-column: 3; grid-row: 1 / 3; padding: 6px 8px 0 18px; }
.bullet legend, .gun legend, .range-card legend { margin-left: -8px; }
.target legend, .firing legend { margin-left: -12px; }
.environment legend { margin-left: -8px; }

.row { display: grid; grid-template-columns: calc(53% + 1px) 92px auto 1fr; align-items: center; height: 33px; }
.bullet .row { height: 32px; }
.gun .row { grid-template-columns: calc(53% + 4px) 92px auto 1fr; }
.target .row, .environment .row { grid-template-columns: calc(43% + 2px) 92px auto 1fr; }
.firing .row { grid-template-columns: 1fr 92px; }
.row input[type="text"] { width: 92px; }
.unit { padding-left: 7px; }
.target .unit { width: 110px; padding-left: 5px; }
.environment .unit { padding-left: 56px; }
.lead { display: flex; align-items: center; justify-content: space-between; padding-right: 9px; }
.check { display: flex; align-items: center; gap: 8px; }
.extra { display: flex; gap: 6px; }
.direction { padding-left: 20px; }
.bullet .drag { height: 30px; grid-template-columns: calc(53% + 1px) 1fr; }
.drag-options { display: flex; padding-left: 3px; color: #888; }
.drag-options .check { width: 163px; }
.summary { padding-top: 3px; }
.summary .row { height: 38px; }
.summary label, .density label, .calculate { font-family: "Open Sans", sans-serif; font-weight: 700; }
.environment .density { height: 45px; }
hr { height: 1px; margin: 5px 0 4px; border: 0; background: #999; }
.gun hr, .environment hr { margin: 8px 0 5px; }

input[type="checkbox"], input[type="radio"] { appearance: none; width: 18px; height: 18px; margin: 0; border: 1px solid #666; border-radius: 4px; background: #f3f3f3; }
input[type="radio"] { border-radius: 50%; }
input[type="radio"]:checked { border: 6px solid #2460b5; background: #fff; }
input[type="checkbox"]:checked { border-color: #2460b5; background: #2460b5 url("data:image/svg+xml,%3Csvg xmlns='http://www.w3.org/2000/svg' viewBox='0 0 14 14'%3E%3Cpath d='m3 7 3 3 5-6' fill='none' stroke='white' stroke-width='1.300'/%3E%3C/svg%3E"); }
input[type="radio"]:disabled { border-color: #c2c2c2; }

.gun-buttons { display: grid; grid-template-columns: repeat(4, 1fr); gap: 7px; padding: 11px 5px 0; }
.gun-buttons button, .calculate { padding: 0; border: 1px solid #ccc; border-radius: 6px; background: #fdfdfd; }
.gun-buttons button { height: 52px; }
.gun-buttons span { display: inline-block; text-align: left; }
.calculate { width: 100%; height: 31px; }

/* Range card */
.range-card { margin-top: 15px; padding: 10px 2px 3px 14px; }
.card-body { display: flex; justify-content: space-between; margin-left: 4px; }
table { flex: 1; border-collapse: collapse; table-layout: fixed; background: #fff; }
th { width: 8.2%; height: 26px; padding: 0 0 0 2px; border-right: 1px solid #e0e0e0; font-weight: 400; text-align: left; white-space: nowrap; }
th.last { width: auto; border: 0; }
td { height: 31px; padding: 0 0 0 6px; }
td:first-child { padding-left: 13px; }
td:nth-child(4) { padding-left: 10px; }
td:nth-child(5) { padding-left: 15px; }
td:nth-child(n+6) { padding-left: 7px; }
.selected { background: #3273d2; color: #fff; }
.scrollbar { width: 20px; margin-left: 3px; background: #eee; }
.scrollbar i { display: block; width: 3px; height: 32px; margin: 130px auto 0; border-radius: 2px; background: #858585; }

/* Bottom tabs */
.tabs { display: flex; height: 39px; }
.tab { height: 27px; padding: 0 6px 4px; border: 0; border-right: 1px solid #ddd; background: #f3f3f3; font-family: "Open Sans", sans-serif; font-weight: 700; line-height: 20px; white-space: nowrap; }
.tab.active { height: 31px; padding: 0 5px 5px 11px; background: #f9f9f9; }
.status-bar { height: 27px; border: 1px solid #999; border-right: 0; border-bottom: 2px solid #b5b9c2; }

.activate { position: absolute; right: 86px; bottom: 116px; color: #bbb; font-size: 19px; line-height: 24px; }
.activate-title { margin-bottom: 4px; font-size: 26px; line-height: 32px; }

/* Windows taskbar */
.taskbar { display: grid; grid-template-columns: 1fr auto 1fr; align-items: center; height: 64px; background: linear-gradient(90deg, #e4ecf7, #d5dff5 25%, #d6daef 50%, #d5dff5 63%, #d6daeb 75%, #e3ebf5 88%, #e0e6f2); }
.weather { display: flex; align-items: center; gap: 4px; padding-left: 28px; line-height: 22px; }
.weather span { color: #555; }
.badge { font: 12px "Open Sans", sans-serif; fill: #fff; }
.pinned { display: flex; align-items: center; }
.pin { display: flex; align-items: center; justify-content: center; position: relative; width: 52px; height: 52px; margin: 0 4px; border-radius: 6px; }
.current { background: #edf0f8; }
.current::after, .open::after { content: ""; position: absolute; bottom: 0; width: 21px; height: 4px; border-radius: 2px; background: #3273c8; }
.open::after { width: 7px; background: #7b7d85; }
.search { display: flex; align-items: center; width: 296px; height: 42px; margin: 0 4px; padding: 0 6px 0 15px; border-radius: 21px; background: #f2f5fc; box-shadow: 0 1px 2px #a9afc4; }
.search input[type="text"] { flex: 1; min-width: 0; padding: 0 0 0 14px; border: 0; background: none; font-size: 18px; text-align: left; }
.search input::placeholder { color: #666; opacity: 1; }
.pre { font: bold 10px "Open Sans", sans-serif; }
.tray { display: flex; align-items: center; justify-content: flex-end; gap: 10px; padding-right: 29px; }
.tray svg:nth-child(-n+2) { margin-right: 11px; }
.clock { margin: 0 2px 0 15px; line-height: 22px; text-align: right; }

/* Mac dock */
.dock { display: flex; align-items: center; height: 80px; margin: 7px 53px 0; padding: 0 4px; border: 1px solid #8b8b7b; border-radius: 24px; background: linear-gradient(90deg, #646557, #5e5f53 40%, #786b55 68%, #65604f); }
.dock a { position: relative; display: flex; flex: 1; justify-content: center; align-items: center; height: 78px; padding-bottom: 6px; }
.rounded { border-radius: 11px; }
.running::after { content: ""; position: absolute; bottom: 2px; width: 5px; height: 5px; border-radius: 50%; background: #000; }
.divider { width: 1px; height: 58px; margin: 0 13px; background: #403d32; }
.cal-month { font: 600 11px Inter, sans-serif; fill: #fff; }
.cal-day { font: 300 27px Inter, sans-serif; fill: #222; }
.tv { font: 500 20px Inter, sans-serif; fill: #fff; }
.lr { font: 600 26px "Open Sans", sans-serif; fill: #57a8f8; }
```
